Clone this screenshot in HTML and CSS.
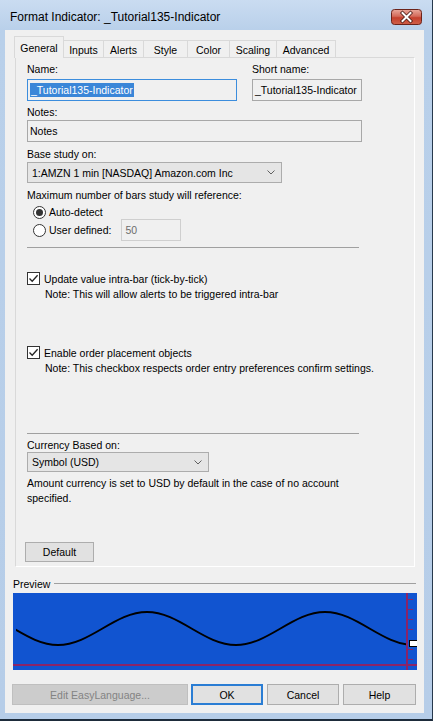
FILE: index.html
```html
<!DOCTYPE html>
<html>
<head>
<meta charset="utf-8">
<title>Format Indicator</title>
<link rel="stylesheet" href="styles.css">
</head>
<body>
<div class="window">
  <div class="titlebar">
    <span class="title">Format Indicator: _Tutorial135-Indicator</span>
    <div class="close">
      <svg width="31" height="16" viewBox="0 0 31 16">
        <defs>
          <linearGradient id="cg" x1="0" y1="0" x2="0" y2="1">
            <stop offset="0" stop-color="#e9a99c"/>
            <stop offset="0.45" stop-color="#d46a5a"/>
            <stop offset="0.55" stop-color="#c4402d"/>
            <stop offset="1" stop-color="#d0614a"/>
          </linearGradient>
        </defs>
        <rect x="0.5" y="0.5" width="30" height="15" rx="3" fill="url(#cg)" stroke="#6b231a"/>
        <path d="M11.5 4 L19.5 12 M19.5 4 L11.5 12" stroke="#4a1a14" stroke-width="3.6" stroke-linecap="square"/>
        <path d="M11.5 4 L19.5 12 M19.5 4 L11.5 12" stroke="#ffffff" stroke-width="2" stroke-linecap="square"/>
      </svg>
    </div>
  </div>
  <div class="client">
    <div class="tabs">
      <div class="tab active t-general">General</div>
      <div class="tab t-inputs">Inputs</div>
      <div class="tab t-alerts">Alerts</div>
      <div class="tab t-style">Style</div>
      <div class="tab t-color">Color</div>
      <div class="tab t-scaling">Scaling</div>
      <div class="tab t-advanced">Advanced</div>
    </div>
    <div class="panel">
      <div class="pair lbl-row"><span>Name:</span><span>Short name:</span></div>
      <div class="pair input-row">
        <div class="field focus"><span class="sel">_Tutorial135-Indicator</span></div>
        <div class="field">_Tutorial135-Indicator</div>
      </div>
      <div class="lbl gap4">Notes:</div>
      <div class="field notes">Notes</div>
      <div class="lbl gap5">Base study on:</div>
      <div class="combo combo-base">
        <span>1:AMZN 1 min [NASDAQ] Amazon.com Inc</span>
        <svg class="chev" width="8" height="5" viewBox="0 0 8 5"><path d="M0.5 0.5 L4 4 L7.5 0.5" fill="none" stroke="#606060" stroke-width="1"/></svg>
      </div>
      <div class="lbl gap5">Maximum number of bars study will reference:</div>
      <div class="radio-row first"><span class="radio on"></span><span>Auto-detect</span></div>
      <div class="radio-row second"><span class="radio"></span><span>User defined:</span><div class="field small">50</div></div>
      <div class="sep sep-top"></div>
      <div class="check-row check-first">
        <span class="check"><svg width="11" height="11" viewBox="0 0 11 11"><path d="M1.5 5.5 L4.2 8.3 L9.6 2.2" fill="none" stroke="#222" stroke-width="1.3"/></svg></span>
        <span>Update value intra-bar (tick-by-tick)</span>
      </div>
      <div class="note">Note: This will allow alerts to be triggered intra-bar</div>
      <div class="check-row check-second">
        <span class="check"><svg width="11" height="11" viewBox="0 0 11 11"><path d="M1.5 5.5 L4.2 8.3 L9.6 2.2" fill="none" stroke="#222" stroke-width="1.3"/></svg></span>
        <span>Enable order placement objects</span>
      </div>
      <div class="note">Note: This checkbox respects order entry preferences confirm settings.</div>
      <div class="sep sep-bottom"></div>
      <div class="lbl gap4 short">Currency Based on:</div>
      <div class="combo combo-cur">
        <span>Symbol (USD)</span>
        <svg class="chev" width="8" height="5" viewBox="0 0 8 5"><path d="M0.5 0.5 L4 4 L7.5 0.5" fill="none" stroke="#606060" stroke-width="1"/></svg>
      </div>
      <div class="para">Amount currency is set to USD by default in the case of no account<br>specified.</div>
      <div class="btn btn-default">Default</div>
    </div>
    <div class="preview-head"><span>Preview</span><div class="rule"></div></div>
    <div class="preview">
      <svg width="404" height="77" viewBox="0 0 404 77">
        <defs><clipPath id="wc"><rect x="3" y="0" width="390" height="77"/></clipPath></defs>
        <rect width="404" height="77" fill="#1154d0"/>
        <path clip-path="url(#wc)" d="M -44 19 C -11.6 19 12.6 52 45 52 C 77.4 52 101.6 19 134 19 C 166.4 19 190.6 52 223 52 C 255.4 52 279.6 19 312 19 C 344.4 19 368.6 52 401 52" fill="none" stroke="#000" stroke-width="2"/>
        <line x1="0" y1="72" x2="404" y2="72" stroke="#8a2468" stroke-width="2"/>
        <line x1="394" y1="0" x2="394" y2="77" stroke="#8a2468" stroke-width="2"/>
        <g stroke="#8a2468" stroke-width="1">
          <line x1="395" y1="6.5" x2="400" y2="6.5"/>
          <line x1="395" y1="16.5" x2="400" y2="16.5"/>
          <line x1="395" y1="26.5" x2="400" y2="26.5"/>
          <line x1="395" y1="36.5" x2="400" y2="36.5"/>
          <line x1="395" y1="56.5" x2="400" y2="56.5"/>
          <line x1="395" y1="66.5" x2="400" y2="66.5"/>
        </g>
        <rect x="396.5" y="47.5" width="8" height="6" fill="#fff" stroke="#000"/>
      </svg>
    </div>
    <div class="buttons">
      <div class="btn btn-edit">Edit EasyLanguage...</div>
      <div class="btn btn-ok">OK</div>
      <div class="btn btn-cancel">Cancel</div>
      <div class="btn btn-help">Help</div>
    </div>
  </div>
</div>
</body>
</html>
```

FILE: styles.css
```css
* { box-sizing: border-box; }

body {
  margin: 0;
  background: #ffffff;
  font-family: "Liberation Sans", Arial, sans-serif;
  font-size: 10.5px;
  color: #000;
}

.window {
  width: 433px;
  height: 721px;
  border-right: 1px solid #27394d;
  border-bottom: 2px solid #1d2b3a;
  background: linear-gradient(#cadcf1, #b9d0ea 30px, #b6cde8);
  display: flex;
  flex-direction: column;
  padding-left: 5px;
}

.titlebar {
  height: 30px;
  margin-left: -5px;
  padding: 4px 0 0 10px;
  display: flex;
  align-items: center;
}

.title {
  font-size: 12px;
  color: #000;
}

.close {
  margin-left: auto;
  margin-right: 10px;
  width: 31px;
  height: 16px;
  display: flex;
}

.client {
  width: 419px;
  height: 683px;
  background: #f0f0f0;
  padding-top: 6px;
  display: flex;
  flex-direction: column;
}

/* Tabs */
.tabs {
  display: flex;
  align-items: flex-end;
  height: 22px;
  margin-left: 9px;
  margin-bottom: -1px;
}

.tab {
  height: 18px;
  padding-top: 2px;
  line-height: 15px;
  text-align: center;
  border-top: 1px solid #d9d9d9;
  border-right: 1px solid #d9d9d9;
  background: #f0f0f0;
  white-space: nowrap;
}

.tab.active {
  height: 22px;
  padding-top: 4px;
  border: 1px solid #d9d9d9;
  border-bottom: none;
  position: relative;
  z-index: 1;
}

.t-general { width: 50px; }
.t-inputs { width: 40px; }
.t-alerts { width: 40px; }
.t-style { width: 44px; }
.t-color { width: 42px; }
.t-scaling { width: 47px; }
.t-advanced { width: 59px; }

/* Panel */
.panel {
  margin-left: 10px;
  width: 400px;
  height: 510px;
  border: 1px solid #d9d9d9;
  border-right-color: #ffffff;
  border-bottom-color: #ffffff;
  background: #f0f0f0;
  padding-left: 11px;
  display: flex;
  flex-direction: column;
  align-items: flex-start;
}

.pair {
  display: grid;
  grid-template-columns: 210px 110px;
  column-gap: 15px;
}

.lbl-row {
  margin-top: 4px;
  height: 15px;
  line-height: 15px;
}

.input-row {
  margin-top: 2px;
}

.lbl {
  height: 15px;
  line-height: 15px;
  white-space: nowrap;
}

.lbl.short { height: 14px; line-height: 14px; }

.gap4 { margin-top: 4px; }
.gap5 { margin-top: 5px; }

.field {
  height: 22px;
  border: 1px solid #a8a8a8;
  background: #f0f0f0;
  padding-left: 2px;
  display: flex;
  align-items: center;
  white-space: nowrap;
  overflow: hidden;
}

.field.focus {
  border-color: #3c8ddd;
}

.sel {
  background: #3a86d8;
  color: #fff;
  line-height: 14px;
  padding: 0 1px;
}

.notes {
  width: 335px;
}

.combo {
  display: flex;
  align-items: center;
  justify-content: space-between;
  background: #e5e5e5;
  border: 1px solid #acacac;
  padding: 0 6px 0 4px;
  white-space: nowrap;
}

.combo-base {
  width: 255px;
  height: 21px;
}

.combo-cur {
  width: 182px;
  height: 20px;
}

.chev { display: block; }

.radio-row {
  display: flex;
  align-items: center;
  padding-left: 6px;
  white-space: nowrap;
}

.radio-row.first {
  margin-top: 2px;
  height: 14px;
}

.radio-row.second {
  height: 22px;
}

.radio {
  width: 13px;
  height: 13px;
  border: 1px solid #333;
  border-radius: 50%;
  background: #fff;
  margin-right: 3px;
  display: flex;
  align-items: center;
  justify-content: center;
}

.radio.on::after {
  content: "";
  width: 7px;
  height: 7px;
  border-radius: 50%;
  background: #333;
}

.field.small {
  width: 60px;
  margin-left: 10px;
  border-color: #cfcfcf;
  color: #6d6d6d;
  padding-left: 3px;
}

.sep {
  width: 332px;
  height: 1px;
  background: #a0a0a0;
}

.sep-top { margin-top: 6px; }
.sep-bottom { margin-top: 57px; }

.check-row {
  display: flex;
  align-items: center;
  height: 15px;
  white-space: nowrap;
}

.check-first { margin-top: 23px; }
.check-second { margin-top: 43px; }

.check {
  width: 13px;
  height: 13px;
  border: 1px solid #333;
  background: #fff;
  margin-right: 4px;
  display: flex;
}

.note {
  margin-top: 1px;
  height: 15px;
  line-height: 15px;
  padding-left: 18px;
  white-space: nowrap;
}

.para {
  margin-top: 4px;
  line-height: 15px;
}

.btn {
  height: 20px;
  background: #e1e1e1;
  border: 1px solid #adadad;
  display: flex;
  align-items: center;
  justify-content: center;
  white-space: nowrap;
}

.btn-default {
  margin-top: 36px;
  margin-left: -2px;
  width: 69px;
}

/* Preview */
.preview-head {
  margin-top: 9px;
  margin-left: 8px;
  margin-right: 8px;
  height: 15px;
  display: flex;
  align-items: center;
}

.rule {
  flex: 1;
  height: 1px;
  background: #a0a0a0;
  margin-left: 4px;
}

.preview {
  margin-top: 2px;
  margin-left: 8px;
  width: 404px;
  height: 77px;
  display: flex;
}

.buttons {
  margin-top: 14px;
  margin-left: 7px;
  display: flex;
  gap: 4px;
}

.buttons .btn { height: 21px; }

.btn-edit {
  width: 176px;
  margin-right: -1px;
  background: #cccccc;
  border-color: #bfbfbf;
  color: #838383;
}

.btn-ok {
  width: 72px;
  border: 2px solid #2a7dd4;
}

.btn-cancel { width: 72px; }
.btn-help { width: 73px; }
```
